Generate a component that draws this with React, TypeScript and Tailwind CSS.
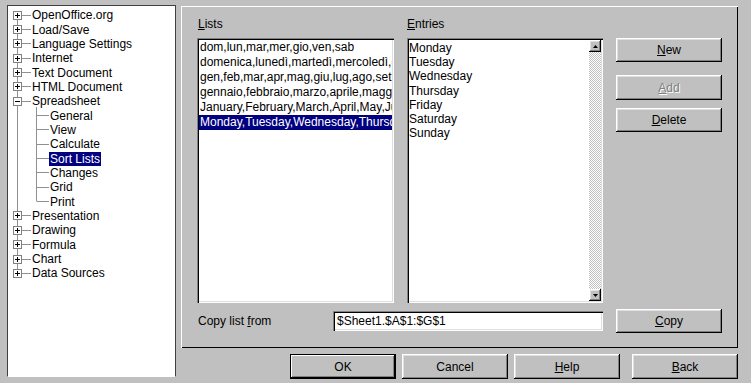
import React from "react";

const RAISED =
  "shadow-[inset_-1px_-1px_#000,inset_1px_1px_#fff,inset_-2px_-2px_#808080,inset_2px_2px_#dfdfdf]";
const SUNKEN =
  "shadow-[inset_1px_1px_#808080,inset_2px_2px_#000,inset_-1px_-1px_#fff,inset_-2px_-2px_#dfdfdf]";

type TopItem = { label: string; expanded?: boolean; children?: string[] };

const tree: TopItem[] = [
  { label: "OpenOffice.org" },
  { label: "Load/Save" },
  { label: "Language Settings" },
  { label: "Internet" },
  { label: "Text Document" },
  { label: "HTML Document" },
  {
    label: "Spreadsheet",
    expanded: true,
    children: ["General", "View", "Calculate", "Sort Lists", "Changes", "Grid", "Print"],
  },
  { label: "Presentation" },
  { label: "Drawing" },
  { label: "Formula" },
  { label: "Chart" },
  { label: "Data Sources" },
];

const LINE = "#909090";

function TopRow({ label, first, last, expanded }: { label: string; first: boolean; last: boolean; expanded?: boolean }) {
  return (
    <div className="flex h-[14.35px] items-center">
      <svg width="23" height="15" className="shrink-0 overflow-visible">
        <path d={`M9.5 ${first ? 7.5 : 0}V${last ? 7.5 : 15}`} stroke={LINE} strokeWidth="1" fill="none" />
        <path d="M14 7.5H23" stroke={LINE} strokeWidth="1" fill="none" />
        {expanded && <path d="M28.5 13V15" stroke={LINE} strokeWidth="1" fill="none" />}
        <rect x="5.5" y="3.5" width="8" height="8" fill="#fff" stroke="#808080" strokeWidth="1" />
        <path d="M7 7.5H12" stroke="#000" strokeWidth="1" />
        {!expanded && <path d="M9.5 5V10" stroke="#000" strokeWidth="1" />}
      </svg>
      <span className="px-[1px] leading-[14px] whitespace-nowrap">{label}</span>
    </div>
  );
}

function ChildRow({ label, last, selected }: { label: string; last: boolean; selected?: boolean }) {
  return (
    <div className="flex h-[14.35px] items-center">
      <svg width="41" height="15" className="shrink-0 overflow-visible">
        <path d="M9.5 0V15" stroke={LINE} strokeWidth="1" fill="none" />
        <path d={`M28.5 0V${last ? 7.5 : 15}`} stroke={LINE} strokeWidth="1" fill="none" />
        <path d="M29 7.5H41" stroke={LINE} strokeWidth="1" fill="none" />
      </svg>
      <span
        className={
          "px-[1px] leading-[14px] whitespace-nowrap " + (selected ? "bg-[#000080] text-white" : "")
        }
      >
        {label}
      </span>
    </div>
  );
}

function Btn({
  children,
  className = "",
  disabled,
}: {
  children: React.ReactNode;
  className?: string;
  disabled?: boolean;
}) {
  return (
    <div
      className={
        "flex items-center justify-center bg-[#c0c0c0] " +
        RAISED +
        " " +
        (disabled ? "text-[#808080] [text-shadow:1px_1px_0_#fff] " : "text-black ") +
        className
      }
    >
      {children}
    </div>
  );
}

const lists = [
  "dom,lun,mar,mer,gio,ven,sab",
  "domenica,lunedì,martedì,mercoledì,giovedì,venerdì,sabato",
  "gen,feb,mar,apr,mag,giu,lug,ago,set,ott,nov,dic",
  "gennaio,febbraio,marzo,aprile,maggio,giugno,luglio,agosto,settembre,ottobre,novembre,dicembre",
  "January,February,March,April,May,June,July,August,September,October,November,December",
  "Monday,Tuesday,Wednesday,Thursday,Friday,Saturday,Sunday",
];

const entries = ["Monday", "Tuesday", "Wednesday", "Thursday", "Friday", "Saturday", "Sunday"];

function ScrollArrow({ up }: { up?: boolean }) {
  return (
    <div className={"h-[12px] w-[12px] flex items-center justify-center bg-[#c0c0c0] " + RAISED}>
      <svg width="5" height="3">
        <polygon points={up ? "2.5,0 5,3 0,3" : "0,0 5,0 2.5,3"} fill="#000" />
      </svg>
    </div>
  );
}

export default function App() {
  return (
    <div className="w-[751px] h-[383px] bg-[#c0c0c0] flex font-['Liberation_Sans',Arial,sans-serif] text-[12px] text-black overflow-hidden">
      {/* tree */}
      <div className="ml-[7px] mt-[5px] w-[169px] h-[372px] bg-white border-l border-t border-r border-l-[#404040] border-t-[#404040] border-r-[#404040] border-b border-b-white pt-[2px]">
        {tree.map((t, i) => (
          <React.Fragment key={t.label}>
            <TopRow label={t.label} first={i === 0} last={i === tree.length - 1} expanded={t.expanded} />
            {t.children?.map((c, j) => (
              <ChildRow
                key={c}
                label={c}
                last={j === t.children!.length - 1}
                selected={c === "Sort Lists"}
              />
            ))}
          </React.Fragment>
        ))}
      </div>

      {/* right column */}
      <div className="ml-[5px] flex flex-col">
        <div className="mt-[6px] w-[557px] h-[342px] flex flex-col pl-[16px] pt-[11px] shadow-[inset_1px_1px_#fff,inset_-1px_-1px_#000]">
          <div className="flex">
            {/* Lists */}
            <div className="w-[197px] flex flex-col">
              <div className="h-[15px] leading-[15px] mb-[6px] pl-[1px]">
                <u>L</u>ists
              </div>
              <div className={"h-[265px] bg-white p-[2px] overflow-hidden " + SUNKEN}>
                {lists.map((l, i) => (
                  <div
                    key={l}
                    className={
                      "h-[15px] leading-[15px] pl-[1px] whitespace-nowrap overflow-hidden " +
                      (i === 5 ? "bg-[#000080] text-white" : "")
                    }
                  >
                    {l}
                  </div>
                ))}
              </div>
            </div>
            {/* Entries */}
            <div className="w-[196px] ml-[13px] flex flex-col">
              <div className="h-[15px] leading-[15px] mb-[6px]">
                <u>E</u>ntries
              </div>
              <div className={"h-[265px] bg-white p-[2px] flex " + SUNKEN}>
                <div className="flex-1 pt-[1px]">
                  {entries.map((e) => (
                    <div key={e} className="h-[14.2px] leading-[14px] whitespace-nowrap">
                      {e}
                    </div>
                  ))}
                </div>
                <div className="w-[12px] flex flex-col">
                  <ScrollArrow up />
                  <div className="flex-1 bg-[repeating-conic-gradient(#c0c0c0_0_25%,#fff_0_50%)] bg-[length:2px_2px]" />
                  <ScrollArrow />
                </div>
              </div>
            </div>
            {/* Buttons */}
            <div className="w-[106px] ml-[13px] pt-[21px] flex flex-col">
              <Btn className="h-[24px]">
                <span>
                  <u>N</u>ew
                </span>
              </Btn>
              <Btn className="h-[25px] mt-[13px]" disabled>
                <span>
                  <u>A</u>dd
                </span>
              </Btn>
              <Btn className="h-[24px] mt-[8px]">
                <span>
                  <u>D</u>elete
                </span>
              </Btn>
            </div>
          </div>
          {/* copy row */}
          <div className="flex items-center mt-[6px] h-[24px]">
            <div className="w-[136px] pl-[1px] whitespace-nowrap">
              Copy list <u>f</u>rom
            </div>
            <div className={"w-[270px] h-[20px] bg-white flex items-center pl-[4px] " + SUNKEN}>
              $Sheet1.$A$1:$G$1
            </div>
            <Btn className="w-[106px] h-[24px] ml-[13px]">
              <span>
                <u>C</u>opy
              </span>
            </Btn>
          </div>
        </div>
        {/* bottom buttons */}
        <div className="flex mt-[6px] pl-[109px] gap-[6px]">
          <Btn className="w-[106px] h-[25px] shadow-[inset_0_0_0_1px_#000,inset_-2px_-2px_#000,inset_2px_2px_#fff,inset_-3px_-3px_#808080]">
            OK
          </Btn>
          <Btn className="w-[106px] h-[25px]">Cancel</Btn>
          <Btn className="w-[106px] h-[25px]">
            <span>
              <u>H</u>elp
            </span>
          </Btn>
          <Btn className="w-[106px] h-[25px] ml-[6px]">
            <span>
              <u>B</u>ack
            </span>
          </Btn>
        </div>
      </div>
    </div>
  );
}
